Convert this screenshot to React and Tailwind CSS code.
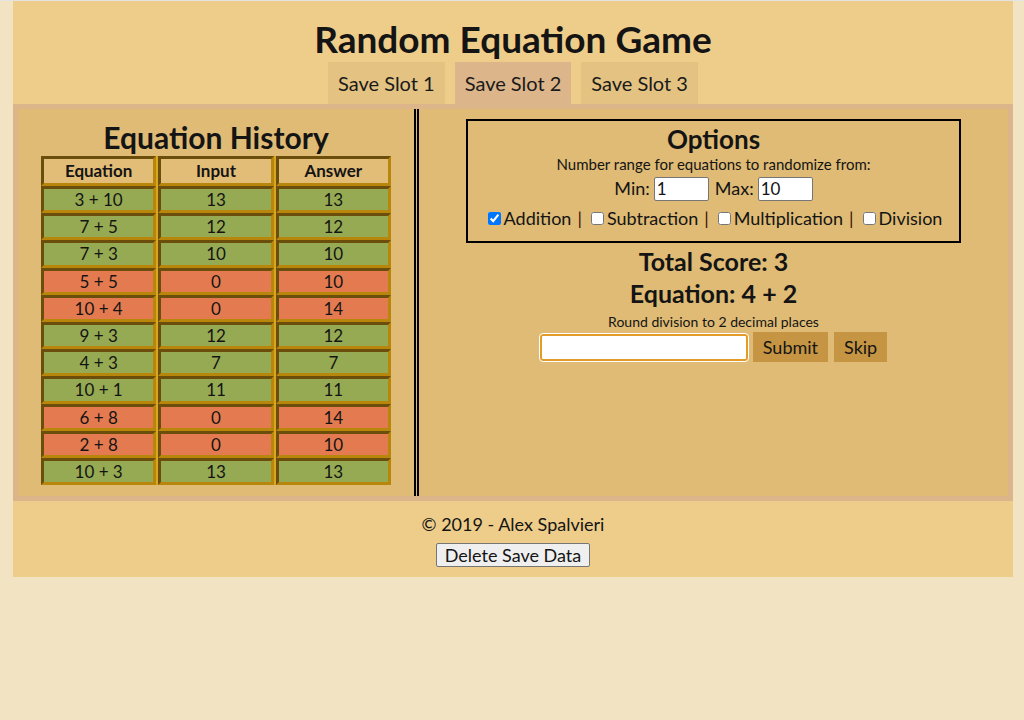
const history = [
  { eq: "3 + 10", input: 13, answer: 13 },
  { eq: "7 + 5", input: 12, answer: 12 },
  { eq: "7 + 3", input: 10, answer: 10 },
  { eq: "5 + 5", input: 0, answer: 10 },
  { eq: "10 + 4", input: 0, answer: 14 },
  { eq: "9 + 3", input: 12, answer: 12 },
  { eq: "4 + 3", input: 7, answer: 7 },
  { eq: "10 + 1", input: 11, answer: 11 },
  { eq: "6 + 8", input: 0, answer: 14 },
  { eq: "2 + 8", input: 0, answer: 10 },
  { eq: "10 + 3", input: 13, answer: 13 },
];

const cell =
  "flex items-center justify-center border-[3px] border-t-[#6b4d0c] border-l-[#6b4d0c] border-b-[#b8860b] border-r-[#b8860b]";

function Slot({ label, active }) {
  return (
    <button
      type="button"
      className={`h-[42px] px-[10px] text-[20px] text-[#1a1a1a] ${active ? "bg-[#dcb58a]" : "bg-[#e3c282]"}`}
    >
      {label}
    </button>
  );
}

function Op({ label, checked, last }) {
  return (
    <span className="flex items-center">
      <input type="checkbox" defaultChecked={checked} className="mx-[3px] h-[13px] w-[13px]" />
      <span>{label}</span>
      {!last && <span className="mx-[6px] text-[#3a0c06]">|</span>}
    </span>
  );
}

export default function App() {
  return (
    <div className="min-h-[720px] bg-[#f2e3c2] font-['Lato','Noto_Sans',sans-serif] text-[#141414]">
      <div className="h-px bg-[#e3e3e3]" />
      <div className="ml-[13px] w-[1000px]">
        <header className="flex h-[103px] flex-col items-center bg-[#eecd8a]">
          <h1 className="mt-[16px] h-[45px] text-[37px] font-bold leading-[44px]">
            Random Equation Game
          </h1>
          <div className="flex gap-[10px]">
            <Slot label="Save Slot 1" />
            <Slot label="Save Slot 2" active />
            <Slot label="Save Slot 3" />
          </div>
        </header>

        <main className="flex h-[397px] border-[5px] border-[#dcb58a] bg-[#dfbb75]">
          <section className="flex w-[401px] flex-col items-center border-r-[5px] border-double border-black">
            <h2 className="pt-[10px] text-[30px] font-bold leading-[37px]">Equation History</h2>
            <div className="grid w-[350px] grid-cols-3 gap-x-[2px] bg-[#daa520] text-[17px]">
              {["Equation", "Input", "Answer"].map((h) => (
                <div key={h} className={`${cell} h-[30px] bg-[#e2bd78] font-bold`}>
                  {h}
                </div>
              ))}
              {history.map((row, i) => {
                const bg = row.input === row.answer ? "bg-[#95aa52]" : "bg-[#e47a50]";
                const h = i % 5 === 2 ? "h-[28px]" : "h-[27px]";
                return [row.eq, row.input, row.answer].map((v, j) => (
                  <div key={`${i}-${j}`} className={`${cell} ${h} ${bg}`}>
                    {v}
                  </div>
                ));
              })}
            </div>
          </section>

          <section className="flex flex-1 flex-col items-center">
            <div className="mt-[10px] flex h-[124px] w-[495px] flex-col items-center border-2 border-black">
              <h3 className="mt-[2px] text-[26px] font-bold leading-[32px]">Options</h3>
              <p className="text-[15px] leading-[18px]">Number range for equations to randomize from:</p>
              <div className="mt-[2px] flex items-center text-[18px]">
                <span>Min:</span>
                <input
                  defaultValue="1"
                  className="ml-[4px] mr-[6px] h-[24px] w-[55px] rounded-[2px] border border-[#767676] bg-white px-[2px] text-[17px]"
                />
                <span>Max:</span>
                <input
                  defaultValue="10"
                  className="ml-[4px] h-[24px] w-[55px] rounded-[2px] border border-[#767676] bg-white px-[2px] text-[17px]"
                />
              </div>
              <div className="mt-[3px] flex items-center text-[18px]">
                <Op label="Addition" checked />
                <Op label="Subtraction" />
                <Op label="Multiplication" />
                <Op label="Division" last />
              </div>
            </div>
            <p className="mt-[2px] text-[25px] font-bold leading-[32px]">Total Score: 3</p>
            <p className="text-[25px] font-bold leading-[32px]">Equation: 4 + 2</p>
            <p className="mt-[4px] text-[14px] leading-[18px]">Round division to 2 decimal places</p>
            <div className="mt-[1px] flex items-center gap-[5px]">
              <input className="h-[27px] w-[208px] rounded-[3px] border-2 border-[#e39c27] bg-white outline outline-1 outline-white" />
              <button type="button" className="h-[30px] bg-[#c69543] px-[10px] text-[18px]">
                Submit
              </button>
              <button type="button" className="ml-[1px] h-[30px] bg-[#c69543] px-[10px] text-[18px]">
                Skip
              </button>
            </div>
          </section>
        </main>

        <footer className="flex h-[76px] flex-col items-center bg-[#eecd8a] pt-[12px]">
          <p className="text-[18px] leading-[22px]">© 2019 - Alex Spalvieri</p>
          <button
            type="button"
            className="mt-[8px] rounded-[2px] border border-[#767676] bg-[#efefef] px-[8px] text-[18px] leading-[22px]"
          >
            Delete Save Data
          </button>
        </footer>
      </div>
    </div>
  );
}
